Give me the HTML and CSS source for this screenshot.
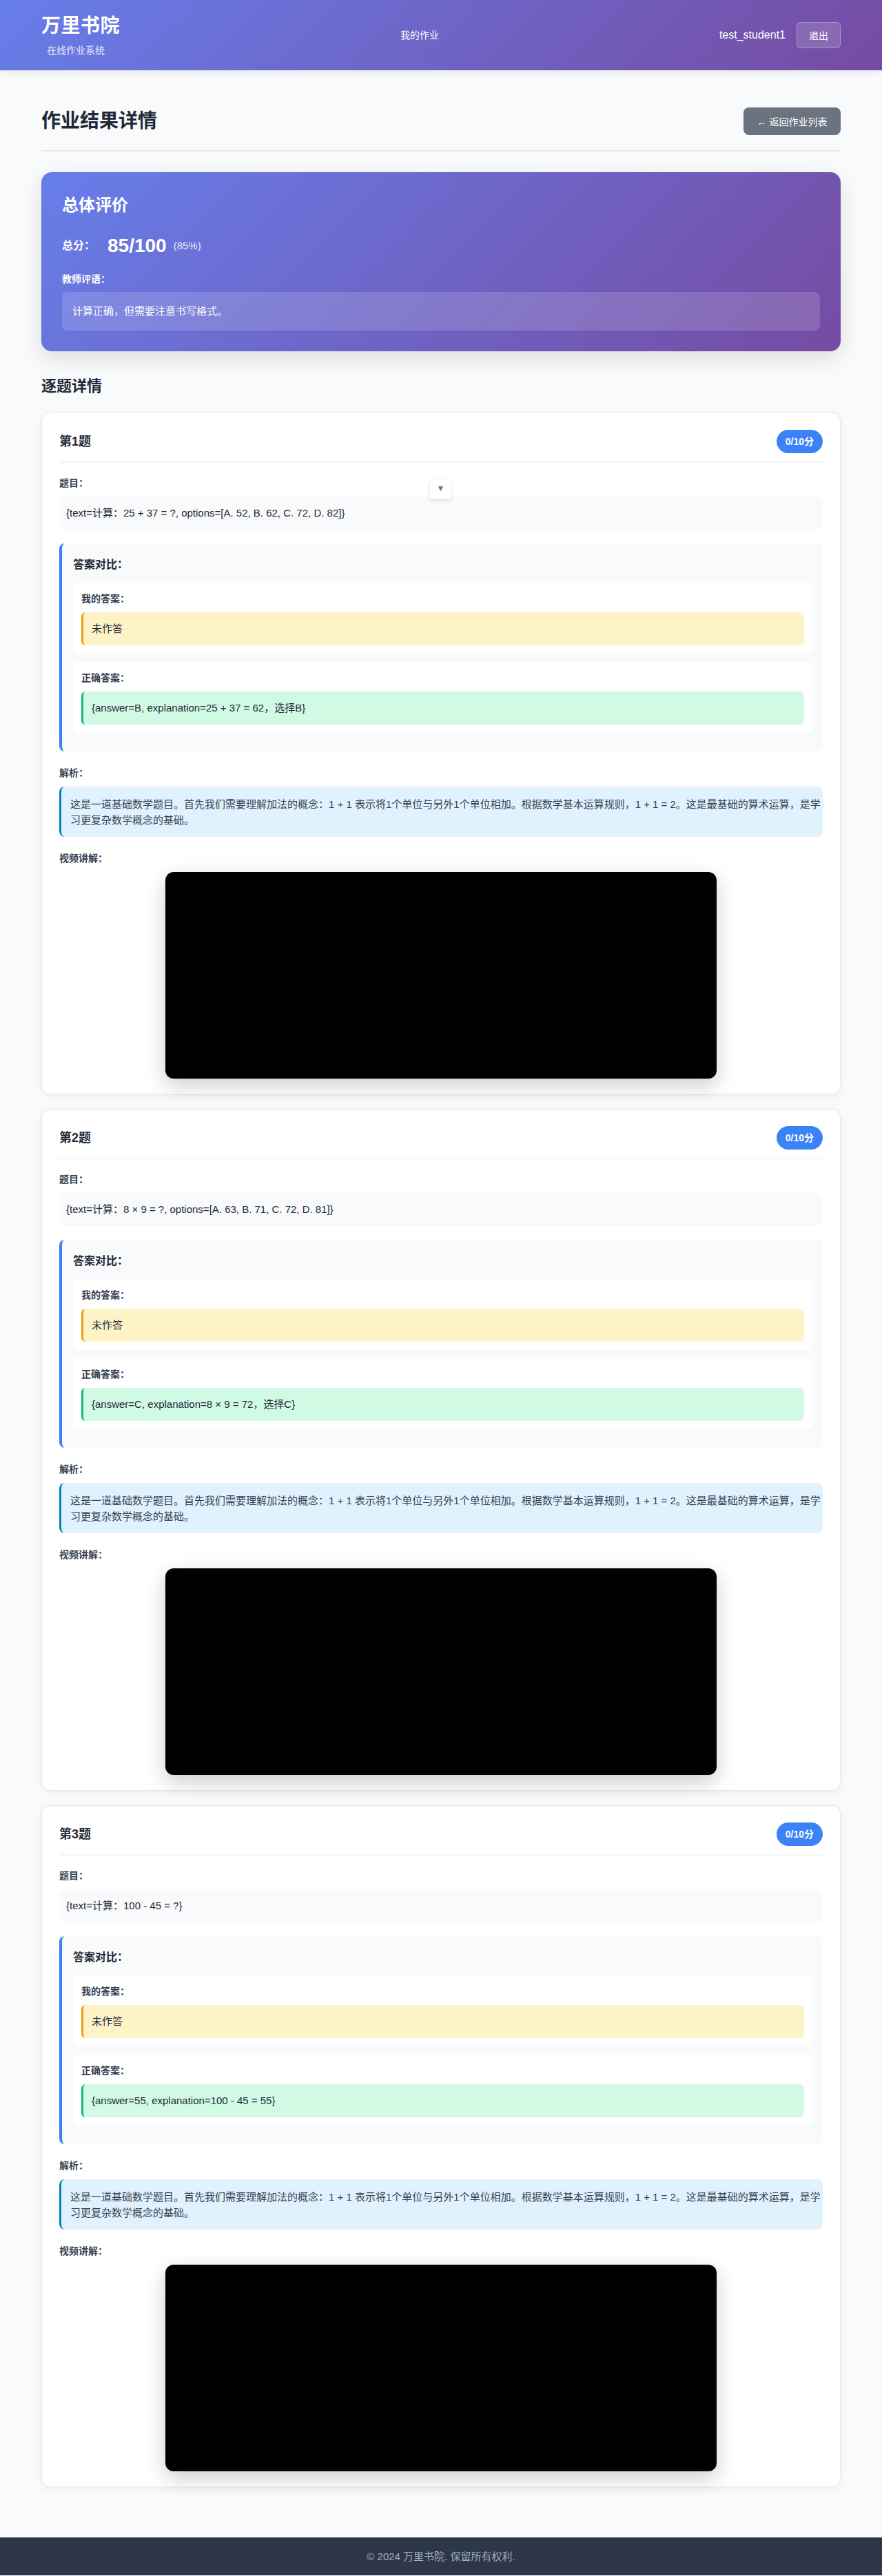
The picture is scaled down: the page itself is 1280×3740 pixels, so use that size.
FILE: index.html
```html
<!DOCTYPE html>
<html lang="zh-CN">
<head>
<meta charset="utf-8">
<title>作业结果详情 - 万里书院</title>
<link rel="stylesheet" href="styles.css">
</head>
<body>
<header class="site-header">
  <div class="container header-inner">
    <div class="brand">
      <div class="brand-name">万里书院</div>
      <div class="brand-sub">在线作业系统</div>
    </div>
    <nav class="nav"><a class="nav-link">我的作业</a></nav>
    <div class="user">
      <span class="username">test_student1</span>
      <button class="logout">退出</button>
    </div>
  </div>
</header>

<main class="container main">
  <div class="page-header">
    <h1 class="page-title">作业结果详情</h1>
    <button class="back-btn">← 返回作业列表</button>
  </div>

  <section class="summary">
    <h2 class="summary-title">总体评价</h2>
    <div class="score-row">
      <span class="score-label">总分：</span>
      <span class="score-value">85/100</span>
      <span class="score-pct">(85%)</span>
    </div>
    <div class="comment-label">教师评语：</div>
    <div class="comment-box">计算正确，但需要注意书写格式。</div>
  </section>

  <h2 class="section-title">逐题详情</h2>

  <article class="q-card">
    <div class="q-head">
      <h3 class="q-title">第1题</h3>
      <span class="q-badge">0/10分</span>
    </div>
    <div class="peek-tab">▼</div>
    <div class="label">题目：</div>
    <div class="q-text">{text=计算：25 + 37 = ?, options=[A. 52, B. 62, C. 72, D. 82]}</div>
    <div class="compare">
      <div class="compare-title">答案对比：</div>
      <div class="ans-block">
        <div class="label">我的答案：</div>
        <div class="ans mine">未作答</div>
      </div>
      <div class="ans-block">
        <div class="label">正确答案：</div>
        <div class="ans right">{answer=B, explanation=25 + 37 = 62，选择B}</div>
      </div>
    </div>
    <div class="label">解析：</div>
    <div class="analysis">这是一道基础数学题目。首先我们需要理解加法的概念：1 + 1 表示将1个单位与另外1个单位相加。根据数学基本运算规则，1 + 1 = 2。这是最基础的算术运算，是学习更复杂数学概念的基础。</div>
    <div class="label">视频讲解：</div>
    <div class="video-wrap"><div class="video"></div></div>
  </article>

  <article class="q-card">
    <div class="q-head">
      <h3 class="q-title">第2题</h3>
      <span class="q-badge">0/10分</span>
    </div>
    <div class="label">题目：</div>
    <div class="q-text">{text=计算：8 × 9 = ?, options=[A. 63, B. 71, C. 72, D. 81]}</div>
    <div class="compare">
      <div class="compare-title">答案对比：</div>
      <div class="ans-block">
        <div class="label">我的答案：</div>
        <div class="ans mine">未作答</div>
      </div>
      <div class="ans-block">
        <div class="label">正确答案：</div>
        <div class="ans right">{answer=C, explanation=8 × 9 = 72，选择C}</div>
      </div>
    </div>
    <div class="label">解析：</div>
    <div class="analysis">这是一道基础数学题目。首先我们需要理解加法的概念：1 + 1 表示将1个单位与另外1个单位相加。根据数学基本运算规则，1 + 1 = 2。这是最基础的算术运算，是学习更复杂数学概念的基础。</div>
    <div class="label">视频讲解：</div>
    <div class="video-wrap"><div class="video"></div></div>
  </article>

  <article class="q-card">
    <div class="q-head">
      <h3 class="q-title">第3题</h3>
      <span class="q-badge">0/10分</span>
    </div>
    <div class="label">题目：</div>
    <div class="q-text">{text=计算：100 - 45 = ?}</div>
    <div class="compare">
      <div class="compare-title">答案对比：</div>
      <div class="ans-block">
        <div class="label">我的答案：</div>
        <div class="ans mine">未作答</div>
      </div>
      <div class="ans-block">
        <div class="label">正确答案：</div>
        <div class="ans right">{answer=55, explanation=100 - 45 = 55}</div>
      </div>
    </div>
    <div class="label">解析：</div>
    <div class="analysis">这是一道基础数学题目。首先我们需要理解加法的概念：1 + 1 表示将1个单位与另外1个单位相加。根据数学基本运算规则，1 + 1 = 2。这是最基础的算术运算，是学习更复杂数学概念的基础。</div>
    <div class="label">视频讲解：</div>
    <div class="video-wrap"><div class="video"></div></div>
  </article>
</main>

<footer class="site-footer">© 2024 万里书院. 保留所有权利.</footer>
</body>
</html>
```

FILE: styles.css
```css
* { box-sizing: border-box; }
html, body { margin: 0; padding: 0; }
body {
  font-family: "Liberation Sans", "Noto Sans CJK SC", sans-serif;
  font-size: 14px;
  line-height: 1.6;
  color: #1f2937;
  background: #f8fafc;
}
.container {
  max-width: 1200px;
  margin: 0 auto;
  padding: 0 20px;
}

/* header */
.site-header {
  height: 102px;
  background: linear-gradient(135deg, #667eea 0%, #764ba2 100%);
  color: #fff;
  box-shadow: 0 2px 10px rgba(0,0,0,0.1);
}
.header-inner {
  height: 102px;
  display: flex;
  align-items: center;
  justify-content: space-between;
}
.brand { display: flex; flex-direction: column; }
.brand-name {
  font-size: 28px;
  font-weight: 600;
  line-height: 34px;
  letter-spacing: 0.5px;
}
.brand-sub {
  font-size: 14px;
  line-height: 18px;
  margin-top: 9px;
  padding-left: 8px;
  opacity: 0.85;
}
.nav-link { color: #fff; font-size: 14px; }
.user { display: flex; align-items: center; gap: 16px; }
.username { font-size: 16px; }
.logout {
  font-family: inherit;
  font-size: 14px;
  color: #fff;
  background: rgba(255,255,255,0.15);
  border: 1px solid rgba(255,255,255,0.3);
  border-radius: 6px;
  height: 38px;
  padding: 0 17px;
}

/* main */
.main { padding-top: 54px; padding-bottom: 73px; }
.page-header {
  display: flex;
  align-items: center;
  justify-content: space-between;
  padding-bottom: 22px;
  border-bottom: 2px solid #e5e7eb;
  margin-bottom: 30px;
}
.page-title {
  margin: 0;
  font-size: 28px;
  font-weight: 600;
  line-height: 40px;
  color: #1f2937;
}
.back-btn {
  font-family: inherit;
  font-size: 14px;
  color: #fff;
  background: #6b7280;
  border: none;
  border-radius: 8px;
  height: 40px;
  width: 141px;
  padding: 0;
}

/* summary */
.summary {
  background: linear-gradient(135deg, #667eea 0%, #764ba2 100%);
  color: #fff;
  border-radius: 15px;
  padding: 30px;
  box-shadow: 0 10px 30px rgba(0,0,0,0.12);
  margin-bottom: 34px;
}
.summary-title {
  margin: 0 0 24px;
  font-size: 24px;
  font-weight: 600;
  line-height: 36px;
}
.score-row {
  display: flex;
  align-items: center;
  height: 34px;
  margin-bottom: 20px;
}
.score-label { font-size: 16px; font-weight: 600; margin-right: 18px; }
.score-value { font-size: 28px; font-weight: 700; margin-right: 10px; }
.score-pct { font-size: 15px; opacity: 0.85; }
.comment-label { font-size: 14px; font-weight: 600; margin-bottom: 8px; line-height: 22px; }
.comment-box {
  background: rgba(255,255,255,0.15);
  border-radius: 8px;
  padding: 17px 15px;
  font-size: 15px;
  line-height: 22px;
}

.section-title {
  margin: 0 0 22px;
  font-size: 22px;
  font-weight: 600;
  line-height: 33px;
  color: #1f2937;
}

/* question card */
.q-card {
  position: relative;
  background: #fff;
  border: 1px solid #e5e7eb;
  border-radius: 12px;
  padding: 24px 25px 22px;
  margin-bottom: 21px;
  box-shadow: 0 2px 10px rgba(0,0,0,0.06);
}
.q-card:last-child { margin-bottom: 0; }
.q-head {
  display: flex;
  align-items: center;
  justify-content: space-between;
  padding-bottom: 12px;
  border-bottom: 2px solid #f3f4f6;
  margin-bottom: 18px;
}
.q-title { margin: 0; font-size: 18px; font-weight: 600; color: #1f2937; line-height: 26px; }
.q-badge {
  background: #3b82f6;
  color: #fff;
  font-weight: 600;
  font-size: 14px;
  line-height: 34px;
  padding: 0 13px;
  border-radius: 17px;
}
.peek-tab {
  position: absolute;
  left: 563px;
  top: 95px;
  width: 31px;
  height: 29px;
  background: #fff;
  border-radius: 10px 10px 0 0;
  box-shadow: 0 2px 6px rgba(0,0,0,0.12);
  color: #6b7280;
  font-size: 12px;
  text-align: center;
  line-height: 29px;
}
.label {
  font-size: 14px;
  font-weight: 600;
  color: #374151;
  line-height: 22px;
  height: 22px;
  margin-bottom: 9px;
}
.q-text {
  background: #f9fafb;
  border-radius: 8px;
  padding: 13px 10px;
  font-size: 15px;
  line-height: 22px;
  margin-bottom: 20px;
  color: #1f2937;
}
.compare {
  background: #f9fafb;
  border-left: 4px solid #3b82f6;
  border-radius: 8px;
  padding: 20px 16px 15px;
  margin-bottom: 20px;
}
.compare-title {
  font-size: 16px;
  font-weight: 600;
  color: #1f2937;
  line-height: 22px;
  height: 22px;
  margin-bottom: 15px;
}
.ans-block {
  background: #fff;
  border-radius: 6px;
  padding: 12px 11px 12px 12px;
  margin-bottom: 12px;
}
.ans {
  border-radius: 6px;
  padding: 13px 12px;
  font-size: 15px;
  line-height: 22px;
  color: #1f2937;
}
.ans.mine { background: #fef3c7; border-left: 3px solid #f59e0b; }
.ans.right { background: #d1fae5; border-left: 3px solid #10b981; }
.analysis {
  background: #e0f2fe;
  border-left: 3px solid #0284c7;
  border-radius: 8px;
  padding: 14px 2px 13px 13px;
  font-size: 15px;
  color: #374151;
  line-height: 23px;
  margin-bottom: 20px;
}
.video-wrap { display: flex; justify-content: center; }
.video {
  width: 800px;
  height: 300px;
  background: #000;
  border-radius: 12px;
  box-shadow: 0 10px 30px rgba(0,0,0,0.2);
}

/* footer */
.site-footer {
  background: #2d3748;
  color: #a0aec0;
  text-align: center;
  font-size: 15px;
  height: 55px;
  line-height: 55px;
}
```
